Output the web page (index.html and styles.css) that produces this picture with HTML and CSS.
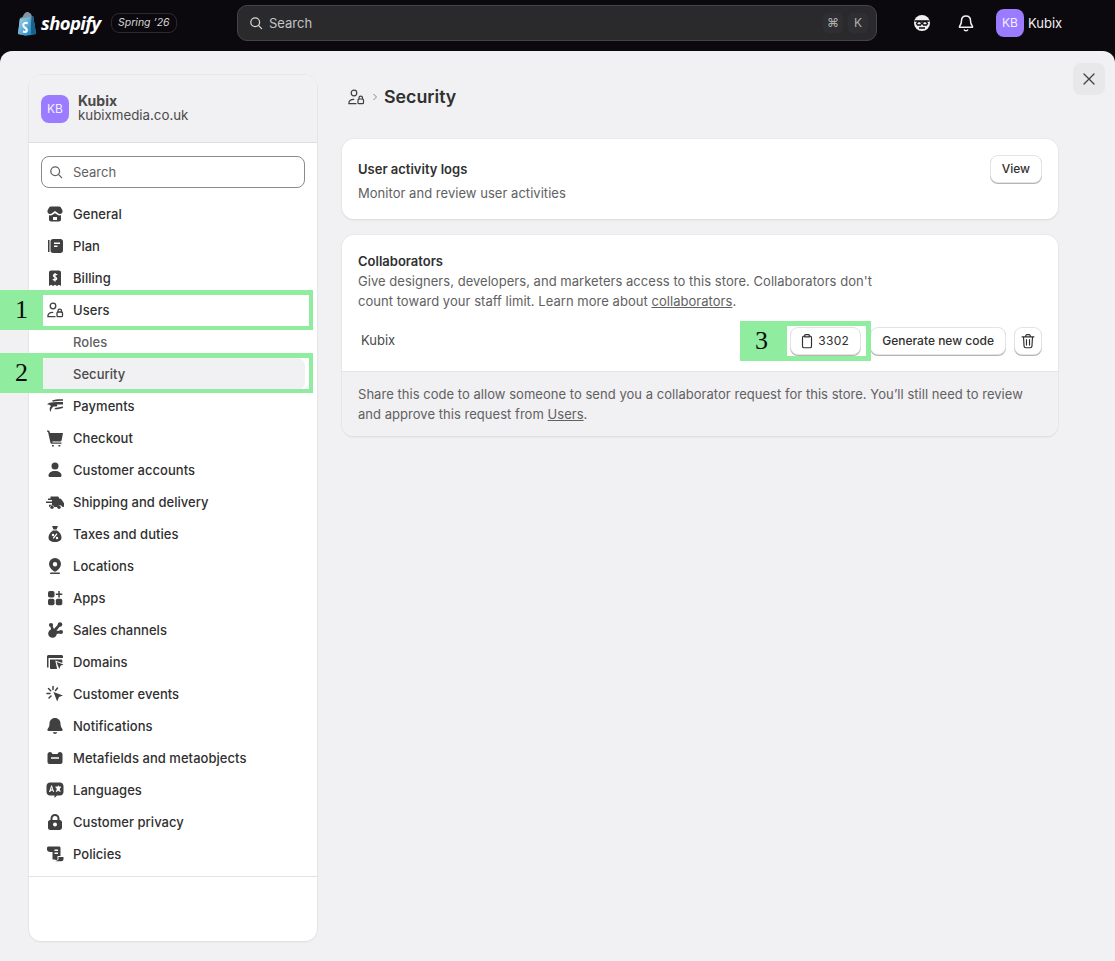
FILE: index.html
```html
<!DOCTYPE html>
<html lang="en">
<head>
<meta charset="utf-8">
<title>Security</title>
<link rel="stylesheet" href="styles.css">
</head>
<body>
<header class="topbar">
  <div class="brand">
    <svg class="bag" viewBox="0 0 22 26"><defs><linearGradient id="bagfill" x1="0" y1="0" x2="1" y2="1"><stop offset="0" stop-color="#a9d8ee"/><stop offset="1" stop-color="#1b86c2"/></linearGradient></defs><path fill="#7f97a3" d="M3 7.500 6 6c.8-2.800 2.800-5 5-5 1 0 1.600.5 2 1 1.200 0 2 1.300 2.400 3L17 5.500 20 24 9 25.500 1 24z"/><path fill="#15618f" d="m15.400 5 1.600.5L20 24l-6.500 1.200z"/><path fill="url(#bagfill)" d="M3 8.500 14 6l1 19-6 .5-8-1.500z"/><path fill="#fff" d="M11.500 11.500 11 14c-2-.8-3.400-.2-3.400.8 0 1.400 3.800 2 3.800 5.200 0 2.600-2.700 3.700-5.400 2.500l.5-2.300c1.400.9 2.700.7 2.700-.2 0-1.600-3.600-2-3.600-5.200 0-2.800 3-4.300 5.900-3.300z"/></svg>
    <span class="wordmark">shopify</span>
    <span class="edition">Spring ’26</span>
  </div>
  <div class="globalsearch">
    <svg class="gs-icon" viewBox="0 0 20 20"><circle cx="9" cy="9" r="5.500"/><path d="m13 13 4 4"/></svg>
    <span class="gs-text">Search</span>
    <span class="kbd">⌘</span>
    <span class="kbd">K</span>
  </div>
  <div class="top-actions">
    <svg class="top-ic" viewBox="0 0 20 20"><circle cx="10" cy="10" r="8" fill="#f0f0f0"/><path fill="none" stroke="#0b090d" stroke-width="1.300" d="M2.500 8h15M6 8.500h2.500l1 2-1 1.500H5.500l-1-1.500zM14 8.500h-2.500l-1 2 1 1.500h3l1-1.500zM7 15h6"/></svg>
    <svg class="top-ic bell" viewBox="0 0 20 20"><path d="M10 3c-2.800 0-4.500 2-4.500 4.800 0 3-1.200 4.500-2 5.700-.2.400 0 .8.500.8h12c.5 0 .7-.4.500-.8-.8-1.200-2-2.700-2-5.700C14.500 5 12.800 3 10 3z"/><path d="M8 16.500a2.200 2.200 0 0 0 4 0"/></svg>
    <div class="user"><span class="avatar">KB</span><span class="user-name">Kubix</span></div>
  </div>
</header>

<div class="panel">
  <aside class="sidebar">
    <div class="shop">
      <span class="avatar">KB</span>
      <div class="shop-text"><strong>Kubix</strong><span>kubixmedia.co.uk</span></div>
    </div>
    <div class="side-body">
      <div class="side-search">
        <svg class="gs-icon dark" viewBox="0 0 20 20"><circle cx="9" cy="9" r="5.500"/><path d="m13 13 4 4"/></svg>
        <span>Search</span>
      </div>
      <nav class="nav">
        <a class="row"><svg class="ic" viewBox="0 0 20 20"><path fill-rule="evenodd" d="M6 2.500h8c.8 0 1.500.4 1.900 1.100l1.500 2.700c.7 1.900-.6 3.700-2.400 3.700-.9 0-1.700-.4-2.200-1.100L10 7l-2.800 1.900C6.700 9.600 5.900 10 5 10c-1.800 0-3.100-1.800-2.400-3.700l1.500-2.700C4.500 2.900 5.200 2.500 6 2.500zM4 11.300c1.500.3 2.900 0 4-.8l2-1.300 2 1.300c1.100.8 2.500 1.100 4 .8v4.200c0 1.100-.9 2-2 2H6c-1.100 0-2-.9-2-2zm4 1.700v3h4v-3z"/></svg>General</a>
        <a class="row"><svg class="ic" viewBox="0 0 20 20"><path fill-rule="evenodd" d="M3 4h1.500v12H3zM8 3h7.500C16.900 3 18 4.100 18 5.500v9c0 1.400-1.100 2.500-2.500 2.500H8c-1.400 0-2.500-1.100-2.500-2.500v-9C5.500 4.100 6.600 3 8 3zm1 3.500V8h6V6.500zM9 9.500V11h3.500V9.500z"/></svg>Plan</a>
        <a class="row"><svg class="ic" viewBox="0 0 20 20"><path fill-rule="evenodd" d="M6 2.500h8c1.100 0 2 .9 2 2V18l-2-1.200-2 1.200-2-1.200L8 18l-2-1.200L4 18V4.500c0-1.100.9-2 2-2z"/><path class="cut" d="M12.200 6.800c-.6-.6-3.600-.9-3.800.8-.2 1.800 3.400 1.200 3.300 3-.1 1.700-3 1.400-3.800.6M10 5v8.500"/></svg>Billing</a>
        <a class="row"><svg class="ic line" viewBox="0 0 20 20"><circle cx="8" cy="6" r="2.800"/><path d="M3 16.500c-.4-2.600 1.600-4.200 4.800-4.200M2.800 16.700H10"/><rect x="12" y="12" width="5.500" height="4.700" rx="1"/><path d="M13 12v-1.200a1.750 1.750 0 0 1 3.500 0V12"/></svg>Users</a>
        <a class="row sub">Roles</a>
        <a class="row sub current">Security</a>
        <a class="row"><svg class="ic" viewBox="0 0 20 20"><path d="M7 4.500C10 3.200 14 3 18 3.200v1.500c-3.500 0-7 .1-10 1.100zM4 7c3-1 9-1 14-.9v2.500h-6.200c.9.700.5 1.800-.6 2H8.500c-1.500 1-2.500 2.800-2.700 5.300C4 13.800 4.500 11.500 6 10 4.800 9 3.500 8.500 2 8.300zM10 12l8-1.500v1.300c-2.500 1.200-5.500 1.700-8.500 1.400z"/></svg>Payments</a>
        <a class="row"><svg class="ic" viewBox="0 0 20 20"><path d="M2 2.500h1.300c.5 0 1 .3 1.200.8L5 5h13l-1.300 7c-.2.800-.8 1.500-1.700 1.500H7.300L7.500 14.500h9V15.800H6.500c-.5 0-.8-.3-1-.8L3 3.800H2z"/><rect x="7" y="17" width="1.800" height="1.500"/><rect x="13.500" y="17" width="1.800" height="1.500"/></svg>Checkout</a>
        <a class="row"><svg class="ic" viewBox="0 0 20 20"><circle cx="10" cy="6" r="3.500"/><path d="M10 11c-4 0-6.500 2-6.500 4.500 0 1 .8 1.500 1.500 1.500h10c.7 0 1.500-.5 1.500-1.500C16.500 13 14 11 10 11z"/></svg>Customer accounts</a>
        <a class="row"><svg class="ic" viewBox="0 0 20 20"><path fill-rule="evenodd" d="M5.500 4.500h7c.8 0 1.500.7 1.500 1.500v.5h1c.5 0 1 .2 1.300.7l2.300 3.300c.2.300.4.700.4 1V14c0 .6-.4 1-1 1h-.6a2.500 2.500 0 0 0-4.800 0H9.400a2.500 2.500 0 0 0-4.800 0H4v-2.300h3V11H1V9.500h6V8H3V6.500h2.500z"/><circle cx="7" cy="15.200" r="1.700"/><circle cx="14" cy="15.200" r="1.700"/></svg>Shipping and delivery</a>
        <a class="row"><svg class="ic" viewBox="0 0 20 20"><path fill-rule="evenodd" d="M7 2h6l-1.500 3.500h-3zM8 6.500h4c3 2 4.500 4.500 4.500 7 0 2.800-2.500 4.500-6.500 4.500s-6.500-1.700-6.500-4.500c0-2.500 1.500-5 4.500-7zm3.500 2.800L7.700 14l1 .8L12.500 10zM8 9.800a1.200 1.200 0 1 0 0 2.400 1.200 1.200 0 0 0 0-2.400zm4 3a1.200 1.200 0 1 0 0 2.400 1.200 1.200 0 0 0 0-2.400z"/></svg>Taxes and duties</a>
        <a class="row"><svg class="ic" viewBox="0 0 20 20"><path fill-rule="evenodd" d="M10 2a6 6 0 0 1 6 6c0 3-2.200 5.200-4.800 7.300-.7.500-1.700.5-2.400 0C6.200 13.200 4 11 4 8a6 6 0 0 1 6-6zm0 4a2.200 2.200 0 1 0 0 4.400A2.200 2.200 0 0 0 10 6z"/><rect x="5" y="16.500" width="10" height="1.500" rx=".7"/></svg>Locations</a>
        <a class="row"><svg class="ic" viewBox="0 0 20 20"><rect x="3" y="3" width="6.500" height="6.500" rx="1.800"/><rect x="3" y="10.800" width="6.500" height="6.500" rx="1.800"/><rect x="10.800" y="10.800" width="6.500" height="6.500" rx="1.800"/><path d="M13.300 3h1.500v2.500h2.500V7h-2.500v2.500h-1.500V7h-2.500V5.500h2.500z"/></svg>Apps</a>
        <a class="row"><svg class="ic" viewBox="0 0 20 20"><circle cx="7.500" cy="13.500" r="4.300"/><circle cx="6" cy="5" r="2.100"/><circle cx="15" cy="4.500" r="2.300"/><circle cx="16" cy="12" r="2"/><path d="m5 5 2 0 2.500 5-3 1zm9-1.500 1.500 2-5 6.500-2.500-2zM10 10.500l6 .3v2.400l-6 1z"/></svg>Sales channels</a>
        <a class="row"><svg class="ic" viewBox="0 0 20 20"><path fill-rule="evenodd" d="M3.500 3h13C17.300 3 18 3.700 18 4.500V6H3.500v9.500H2.500c-.5 0-.5-.3-.5-.8V4.500C2 3.700 2.700 3 3.500 3z"/><path d="M5 7.500h11.500c.5 0 .8.300.8.800V11l-7-2.500 1.800 8.500H6c-.6 0-1-.4-1-1z"/><path d="m11.500 10 7 2.500-3 1.200-1.200 3.300z"/></svg>Domains</a>
        <a class="row"><svg class="ic" viewBox="0 0 20 20"><path d="m8.500 8 9.500 3.400-4 1.600-1.800 4.500z"/><path class="cut2" d="M8 2.500v3M3.500 4.500 5.700 6.700M2 9.500h3M4 14l2-2M12.500 4 10.500 6.500"/></svg>Customer events</a>
        <a class="row"><svg class="ic" viewBox="0 0 20 20"><path d="M10 2c-3.300 0-5.500 2.500-5.500 5.800 0 2.700-1 4-2 5.400-.4.600 0 1.800 1 1.800h13c1 0 1.400-1.200 1-1.800-1-1.400-2-2.700-2-5.400C15.500 4.500 13.300 2 10 2zM7.700 16.200a2.400 2.400 0 0 0 4.600 0z"/></svg>Notifications</a>
        <a class="row"><svg class="ic" viewBox="0 0 20 20"><path fill-rule="evenodd" d="M5 4c1.300 0 2.200.8 2.400 2h5.200c.2-1.200 1.100-2 2.400-2 1.400 0 2.500 1.100 2.500 2.500V14c0 1.100-.9 2-2 2H4.500c-1.100 0-2-.9-2-2V6.500C2.500 5.100 3.600 4 5 4zm1 5.200v1.600h8V9.200z"/></svg>Metafields and metaobjects</a>
        <a class="row"><svg class="ic" viewBox="0 0 20 20"><path fill-rule="evenodd" d="M5 2.500h10c1.900 0 3.500 1.600 3.500 3.500v6c0 1.900-1.600 3.500-3.500 3.500h-3L9.500 18v-2.500H5c-1.900 0-3.500-1.600-3.500-3.500V6c0-1.900 1.600-3.500 3.500-3.500zM6.200 5.500 4 12h1.400l.4-1.300h1.900l.4 1.300H9.100L7 5.500zm.5 1.800.6 2.200H6.100zM13.500 5l-.7 1.500h-2.300v1.200h.7l.7 2.300-1.200 1.100.6 1 1.900-1.300 2 1.300.5-1-1.100-1.100.7-2.300h.6V6.500h-2.100z"/></svg>Languages</a>
        <a class="row"><svg class="ic" viewBox="0 0 20 20"><path fill-rule="evenodd" d="M10 2a4.500 4.500 0 0 1 4.500 4.500V8h.3C16 8 17 9 17 10.200v5.300c0 1.400-1.100 2.500-2.500 2.500h-9A2.500 2.500 0 0 1 3 15.500v-5.300C3 9 4 8 5.200 8h.3V6.500A4.500 4.500 0 0 1 10 2zm0 2a2.500 2.500 0 0 0-2.500 2.500V8h5V6.500A2.500 2.500 0 0 0 10 4zm0 6.500a2 2 0 1 0 0 4 2 2 0 0 0 0-4z"/></svg>Customer privacy</a>
        <a class="row"><svg class="ic" viewBox="0 0 20 20"><path fill-rule="evenodd" d="M3.500 2.500H14c1 0 1.500.7 1.500 1.500v8h-3v3c0 1.500-2 1.500-2.500.5H7.500V8H5c-1.500 0-3-1-3-2.500v-1.500c0-.8.700-1.500 1.500-1.500zM9.500 5.500V7h3.500V5.500zm0 3V10h3.500V8.500z"/><path d="M13.500 13H18.500v2c0 1.300-1 2.300-2.300 2.300H10c1.500-.3 2.800-1 3.500-2z"/></svg>Policies</a>
      </nav>
    </div>
    <div class="side-foot"></div>
  </aside>

  <main class="content">
    <div class="crumbs">
      <svg class="crumb-ic" viewBox="0 0 20 20"><circle cx="8" cy="6" r="2.800"/><path d="M3 16.500c-.4-2.600 1.600-4.200 4.800-4.200M2.800 16.700H10"/><rect x="12" y="12" width="5.500" height="4.700" rx="1"/><path d="M13 12v-1.200a1.750 1.750 0 0 1 3.500 0V12"/></svg>
      <svg class="chev" viewBox="0 0 10 10"><path d="m3.500 2 3 3-3 3"/></svg>
      <h1>Security</h1>
    </div>

    <section class="card logs">
      <div>
        <h2>User activity logs</h2>
        <p class="muted">Monitor and review user activities</p>
      </div>
      <button class="btn">View</button>
    </section>

    <section class="card collab">
      <div class="collab-main">
        <h2 class="tight">Collaborators</h2>
        <p class="muted narrow">Give designers, developers, and marketers access to this store. Collaborators don't count toward your staff limit. Learn more about <u>collaborators</u>.</p>
        <div class="code-row">
          <span class="store-name">Kubix</span>
          <div class="code-actions">
            <button class="btn code"><svg class="btn-ic" viewBox="0 0 20 20"><path d="M7.500 4.500H6.800C5.800 4.500 5 5.300 5 6.300v9.400c0 1 .8 1.800 1.800 1.800h6.400c1 0 1.800-.8 1.800-1.800V6.300c0-1-.8-1.800-1.800-1.800h-.7M8.500 3h3c.6 0 1 .4 1 1v1.500h-5V4c0-.6.400-1 1-1z"/></svg>3302</button>
            <button class="btn">Generate new code</button>
            <button class="btn trash"><svg class="btn-ic" viewBox="0 0 20 20"><path d="M3.500 5.500h13M7.500 5.500V4.300c0-.7.600-1.300 1.300-1.300h2.400c.7 0 1.300.6 1.300 1.300v1.200M5 5.500l.6 10.200c.1 1 .9 1.800 1.900 1.800h5c1 0 1.800-.8 1.900-1.800L15 5.500M8.300 8.500v6M11.700 8.500v6"/></svg></button>
          </div>
        </div>
      </div>
      <div class="collab-foot muted">Share this code to allow someone to send you a collaborator request for this store. You’ll still need to review and approve this request from <u>Users</u>.</div>
    </section>
  </main>

  <button class="close"><svg viewBox="0 0 20 20"><path d="m5 5 10 10M15 5 5 15"/></svg></button>
</div>

<div class="mark mark-1"><span class="mark-num">1</span><span class="mark-frame"></span></div>
<div class="mark mark-2"><span class="mark-num">2</span><span class="mark-frame"></span></div>
<div class="mark mark-3"><span class="mark-num">3</span><span class="mark-frame"></span></div>
</body>
</html>
```
FILE: styles.css
```css
* { box-sizing: border-box; }
html, body { margin: 0; height: 961px; overflow: hidden; }
body {
  background: #0b090d;
  font-family: Inter, "Liberation Sans", sans-serif;
  font-size: 13px;
  line-height: 20px;
  color: #303030;
  display: flex;
  flex-direction: column;
  position: relative;
}

/* top bar */
.topbar { height: 51px; flex: none; display: flex; align-items: flex-start; color: #e3e3e3; }
.brand { width: 237px; height: 46px; padding-left: 17px; display: flex; align-items: center; }
.bag { width: 21px; height: 25px; flex: none; }
.wordmark { margin-left: 3px; font: italic 700 18.500px/24px "Open Sans", sans-serif; color: #fff; letter-spacing: -.6px; }
.edition {
  margin-left: 10px; height: 20px; padding: 0 6.500px; border: 1px solid #2b2a2e; border-radius: 8px;
  font-size: 10.500px; font-style: italic; line-height: 18px; color: #d5d5d5; white-space: nowrap;
}
.globalsearch {
  margin-top: 5px; width: 640px; height: 36px; padding: 0 8px 0 10px;
  display: flex; align-items: center; gap: 4px;
  background: #2a292c; border: 1px solid #454448; border-radius: 10px;
}
.gs-icon { width: 16px; height: 16px; fill: none; stroke: #d8d8d8; stroke-width: 1.6; stroke-linecap: round; flex: none; }
.gs-icon.dark { stroke: #616161; }
.gs-text { flex: 1; margin-left: 1px; color: #c4c4c4; font-size: 13px; }
.kbd { width: 20px; height: 20px; margin-left: 1px; text-align: center; border-radius: 5px; background: #2f2e32; color: #b0b0b0; font-size: 12px; }
.top-actions { flex: 1; margin-top: 9px; padding-left: 35px; display: flex; align-items: center; }
.top-ic { width: 20px; height: 20px; flex: none; }
.top-ic.bell { margin-left: 24px; fill: none; stroke: #f2f2f2; stroke-width: 1.5; }
.user { margin-left: 20px; display: flex; align-items: center; gap: 4px; }
.user-name { color: #f0f0f0; font-size: 13px; }
.avatar {
  width: 28px; height: 28px; flex: none; border-radius: 8px; background: #9b7bff; color: #f3efff;
  font-size: 12px; line-height: 28px; text-align: center;
}

/* panel */
.panel {
  flex: 1; position: relative; display: flex; align-items: flex-start; gap: 25px;
  padding: 24px 0 0 29px; background: #f1f0f3; border-radius: 12px 12px 0 0;
}
.sidebar {
  width: 288px; height: 866px; flex: none; display: flex; flex-direction: column;
  background: #fff; border-radius: 12px; box-shadow: 0 0 0 .5px #e0dfe3, 0 1px 2px rgba(0,0,0,.08); overflow: hidden;
}
.shop {
  height: 68px; flex: none; padding: 0 12px; display: flex; align-items: center; gap: 9px;
  background: #f1f0f3; border-bottom: 1px solid #dfdee2;
}
.shop-text { display: flex; flex-direction: column; line-height: 15px; font-size: 13.300px; color: #4a4a4a; margin-top: -1px; }
.shop-text strong { font-weight: 700; font-size: 14px; }
.side-body { padding: 13px 12px 0; }
.side-search {
  height: 32px; padding: 0 6px; display: flex; align-items: center; gap: 9px;
  border: 1px solid #8a8a8a; border-radius: 8px; color: #616161;
}
.nav { margin-top: 10px; padding-bottom: 6px; border-bottom: 1px solid #e3e3e3; margin-left: -12px; margin-right: -12px; padding-left: 12px; padding-right: 12px; }
.row { height: 32px; display: flex; align-items: center; gap: 8px; padding-left: 4px; font-weight: 500; letter-spacing: .04px; color: #303030; border-radius: 8px; }
.row.sub { padding-left: 32px; color: #616161; }
.row.current { background: #f1f0f3; color: #4a4a4a; }
.ic { width: 20px; height: 20px; flex: none; fill: #404040; }
.ic.line { fill: none; stroke: #404040; stroke-width: 1.3; stroke-linecap: round; }
.ic .cut { fill: none; stroke: #fff; stroke-width: 1.3; }
.ic .cut2 { fill: none; stroke: #404040; stroke-width: 1.5; stroke-linecap: round; }
.side-foot { flex: 1; }

/* content */
.content { width: 716px; flex: none; }
.crumbs { height: 44px; margin-bottom: 20px; display: flex; align-items: center; }
.crumb-ic { width: 20px; height: 20px; margin-left: 4px; fill: none; stroke: #404040; stroke-width: 1.2; stroke-linecap: round; }
.chev { width: 10px; height: 10px; margin: 0 3px 0 4px; fill: none; stroke: #8a8a8a; stroke-width: 1; }
h1 { margin: 0 0 0 1px; font-size: 17.800px; line-height: 24px; font-weight: 600; color: #303030; }
h2 { margin: 0 0 4px; font-size: 13px; line-height: 20px; font-weight: 600; color: #303030; }
h2.tight { margin-bottom: 0; }
p { margin: 0; }
.muted { color: #616161; font-weight: 400; letter-spacing: .035px; }
.narrow { max-width: 530px; }
.card { background: #fff; border-radius: 12px; box-shadow: 0 0 0 .5px #e3e3e3, 0 1px 2px rgba(0,0,0,.12); }
.logs { height: 80px; margin-bottom: 16px; padding: 20px 16px 0; display: flex; justify-content: space-between; align-items: flex-start; }
.logs .btn { margin-top: -4px; }
.collab { overflow: hidden; }
.collab-main { padding: 16px 16px 0; height: 136px; }
.code-row { margin-top: 14px; height: 32px; display: flex; align-items: center; justify-content: space-between; padding-left: 3px; }
.store-name { margin-top: -3px; color: #4a4a4a; }
.code-actions { display: flex; align-items: center; gap: 8px; }
.btn {
  height: 28px; padding: 0 11px; display: inline-flex; align-items: center; gap: 4px;
  background: #fff; border: 1px solid #e3e3e3; border-radius: 8px; box-shadow: 0 1px 0 #b5b5b5;
  font: 500 12px/20px Inter, sans-serif; color: #303030;
}
.code { padding: 0 11px 0 7px; gap: 2px; margin-right: 1px; font-weight: 400; letter-spacing: .3px; }
.trash { width: 28px; padding: 0; justify-content: center; }
.btn-ic { width: 18px; height: 18px; fill: none; stroke: #303030; stroke-width: 1.3; stroke-linecap: round; flex: none; }
.collab-foot { height: 65px; padding: 12px 16px; background: #f1f0f3; border-top: 1px solid #e3e3e3; }
.close {
  position: absolute; top: 12px; right: 10px; width: 32px; height: 32px; padding: 6px; border: 0;
  border-radius: 8px; background: #e8e7ea;
}
.close svg { display: block; width: 20px; height: 20px; fill: none; stroke: #404040; stroke-width: 1.3; stroke-linecap: round; }

/* annotation overlays */
.mark { position: absolute; display: flex; height: 40px; }
.mark-1 { left: 0; top: 290px; }
.mark-2 { left: 0; top: 353px; }
.mark-3 { left: 740px; top: 321px; }
.mark-num {
  width: 43px; background: #90ec9f; color: #0b0b0b; text-align: center;
  font: 26px/40px "Liberation Serif", serif;
}
.mark-3 .mark-num { width: 47px; padding-right: 4px; }
.mark-frame { width: 270px; border: solid #90ec9f; border-width: 5px 4px 4px 0; }
.mark-3 .mark-frame { width: 84px; border-width: 5px 5px 5px 0; }
```
